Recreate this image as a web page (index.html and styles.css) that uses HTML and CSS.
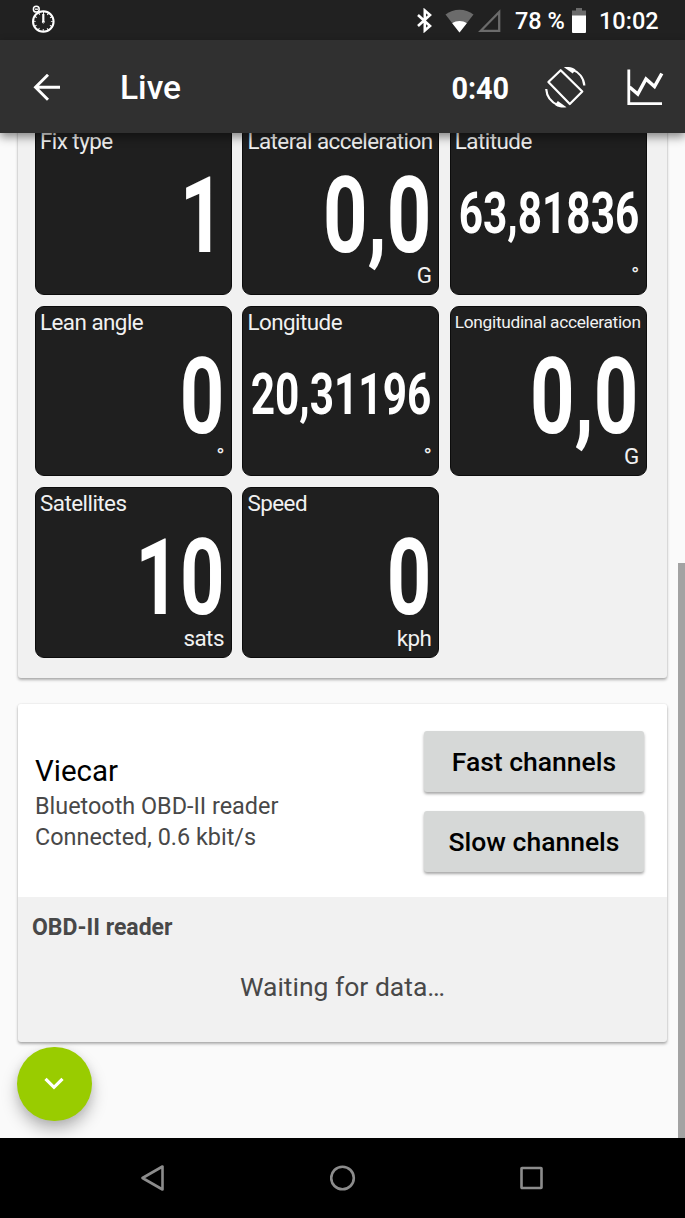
FILE: index.html
```html
<!DOCTYPE html>
<html lang="en">
<head>
    <meta charset="UTF-8">
    <meta name="viewport" content="width=device-width, initial-scale=1.0">
    <title>Live</title>
    <link rel="stylesheet" href="styles.css">
</head>
<body>
    <div class="status-bar">
        <svg class="stopwatch" width="26" height="30" viewBox="0 0 26 30" fill="none" stroke="#fff">
            <circle cx="12.3" cy="17.5" r="10.3" stroke-width="2"/>
            <circle cx="12.3" cy="17.5" r="8.6" stroke-width="2" stroke-dasharray="1 3.503" stroke-dashoffset=".5"/>
            <circle cx="5.3" cy="5.2" r="2.9" stroke-width="1.5"/>
            <path d="M4 5.2h3" stroke-width="1.3"/>
            <path d="M12.3 10v8" stroke-width="2.2"/>
            <circle cx="12.3" cy="18" r="1" stroke-width="1"/>
        </svg>
        <div class="status-icons">
            <svg class="bluetooth" width="17" height="25" viewBox="0 0 17 25" fill="none" stroke="#fff" stroke-width="2.6">
                <path d="M2 7L14 18L8.800 22.500V2.500L14 7L2 18"/>
            </svg>
            <svg class="wifi" width="29" height="24" viewBox="0 0 29 24">
                <path d="M.5 5.5C8.5-.8 20.5-.8 28.5 5.5L14.500 23.500z" fill="#6b6b6b"/>
                <path d="M7.200 14.200C11.500 11.200 17.500 11.200 21.800 14.200L14.500 23.500z" fill="#fff"/>
            </svg>
            <svg class="signal" width="23" height="24" viewBox="0 0 23 24" fill="none" stroke="#6b6b6b" stroke-width="2.3">
                <path d="M21.200 3v18.800H2.800z"/>
            </svg>
            <span class="percent">78 %</span>
            <svg class="battery" width="14" height="25" viewBox="0 0 14 25">
                <path d="M4 0h6v2.500h4V8H0V2.500h4z" fill="#6b6b6b"/>
                <path d="M0 7.500h14V24a1 1 0 0 1-1 1H1a1 1 0 0 1-1-1z" fill="#fff"/>
            </svg>
            <span class="clock">10:02</span>
        </div>
    </div>

    <header class="app-bar">
        <svg class="back" width="28" height="28" viewBox="0 0 28 28" fill="none" stroke="#fff" stroke-width="2.9">
            <path d="M27 13.300H2.500M15 .8L2.500 13.300L15 25.800"/>
        </svg>
        <h1>Live</h1>
        <span class="timer">0:40</span>
        <svg class="rotate" width="42" height="42" viewBox="0 0 42 42" fill="none" stroke="#fff" stroke-width="2.2">
            <path d="M15.700 3.200L3.400 15L24.800 37L37.300 24.500z" stroke-linejoin="round"/>
            <path d="M27 2.500C34 5 38.800 11 39.300 18.500"/>
            <path d="M1.200 22C1.700 29.500 6.500 35.500 13.500 38.500"/>
            <path d="M19 .2C23-.6 27 .2 30.500 2.500L27.800 6.500z" fill="#fff" stroke="none"/>
            <path d="M21.500 40.300C17.500 41 13.500 40.300 10 38L12.800 34z" fill="#fff" stroke="none"/>
        </svg>
        <svg class="chart" width="37" height="37" viewBox="0 0 37 37" fill="none" stroke="#fff">
            <path d="M1.800.500V34.700H35" stroke-width="2.8"/>
            <path d="M2.500 18L10.800 25L19 10L27.500 17.500L34.800 4.500" stroke-width="3.5"/>
        </svg>
    </header>

    <main class="content">
        <section class="card gps">
            <div class="tiles">
                <div class="tile">
                    <span class="title">Fix type</span>
                    <span class="value">1</span>
                </div>
                <div class="tile">
                    <span class="title">Lateral acceleration</span>
                    <span class="value">0,0</span>
                    <span class="unit">G</span>
                </div>
                <div class="tile">
                    <span class="title">Latitude</span>
                    <span class="value small">63,81836</span>
                    <span class="unit">°</span>
                </div>
                <div class="tile">
                    <span class="title">Lean angle</span>
                    <span class="value">0</span>
                    <span class="unit">°</span>
                </div>
                <div class="tile">
                    <span class="title">Longitude</span>
                    <span class="value small">20,31196</span>
                    <span class="unit">°</span>
                </div>
                <div class="tile">
                    <span class="title long">Longitudinal acceleration</span>
                    <span class="value">0,0</span>
                    <span class="unit">G</span>
                </div>
                <div class="tile">
                    <span class="title">Satellites</span>
                    <span class="value">10</span>
                    <span class="unit">sats</span>
                </div>
                <div class="tile">
                    <span class="title">Speed</span>
                    <span class="value">0</span>
                    <span class="unit">kph</span>
                </div>
            </div>
        </section>

        <section class="card obd">
            <div class="device">
                <div class="device-info">
                    <h2>Viecar</h2>
                    <p>Bluetooth OBD-II reader</p>
                    <p>Connected, 0.6 kbit/s</p>
                </div>
                <div class="device-buttons">
                    <button type="button">Fast channels</button>
                    <button type="button">Slow channels</button>
                </div>
            </div>
            <div class="reader">
                <h3>OBD-II reader</h3>
                <p>Waiting for data…</p>
            </div>
        </section>

        <div class="scrollbar"></div>
        <button type="button" class="fab" aria-label="Scroll down">
            <svg width="20" height="13" viewBox="0 0 20 13" fill="none" stroke="#fff" stroke-width="3.2">
                <path d="M1.500 1.800L10 10.300L18.500 1.800"/>
            </svg>
        </button>
    </main>

    <nav class="nav-bar">
        <svg width="26" height="26" viewBox="0 0 26 26"><path d="M22.500 1.500v23L2.500 13z"/></svg>
        <svg width="26" height="26" viewBox="0 0 26 26"><circle cx="12.500" cy="13" r="11.300"/></svg>
        <svg width="26" height="26" viewBox="0 0 26 26"><rect x="2.500" y="3" width="20" height="20" rx=".5"/></svg>
    </nav>
</body>
</html>
```

FILE: styles.css
```css
* {
    box-sizing: border-box;
}

body {
    font-family: Roboto, sans-serif;
    background-color: #fafafa;
    margin: 0;
    height: 1218px;
    overflow: hidden;
    display: flex;
    flex-direction: column;
}

h1, h2, h3, p {
    margin: 0;
}

svg {
    display: block;
    flex: none;
}

.status-bar {
    height: 40px;
    flex: none;
    background-color: #212121;
    color: #fff;
    display: flex;
    justify-content: space-between;
    padding: 0 26px 0 31px;
}

.stopwatch {
    margin-top: 4px;
}

.status-icons {
    display: flex;
    align-items: center;
    padding-top: 1px;
    font-size: 23.5px;
    font-weight: 500;
}

.bluetooth {
    margin-right: 12px;
}

.wifi {
    margin-right: 4px;
}

.signal {
    margin-right: 14px;
}

.percent {
    width: 57px;
    white-space: nowrap;
}

.clock {
    margin-left: 13px;
    width: 60px;
    white-space: nowrap;
}

.app-bar {
    height: 93px;
    flex: none;
    position: relative;
    z-index: 2;
    background-color: #303030;
    color: #fff;
    display: flex;
    align-items: center;
    padding: 2px 21px 0 33px;
    box-shadow: 0 4px 9px rgba(0, 0, 0, 0.45);
}

.app-bar h1 {
    margin-left: 59px;
    font-size: 33.5px;
    font-weight: 500;
}

.timer {
    margin-left: auto;
    font-size: 32px;
    font-weight: 700;
    transform: scaleX(0.9);
    transform-origin: right;
}

.rotate {
    margin-left: 36px;
}

.chart {
    margin-left: 40px;
}

.content {
    height: 1005px;
    flex: none;
    position: relative;
    overflow: hidden;
    padding: 0 18px;
}

.card {
    background-color: #f1f1f1;
    border-radius: 3px;
    box-shadow: 0 2px 3px rgba(0, 0, 0, 0.3), 0 0 2px rgba(0, 0, 0, 0.12);
}

.gps {
    margin-top: -30px;
    padding: 21.5px 20px 20.5px 17px;
}

.tiles {
    display: grid;
    grid-template-columns: repeat(3, 197px);
    grid-auto-rows: 170.6px;
    gap: 10.7px 10.4px;
}

.tile {
    background-color: #1f1f1f;
    border: 1px solid #0c0c0c;
    border-radius: 9px;
    color: #fff;
    display: flex;
    flex-direction: column;
    padding: 0 7px 0 4px;
}

.title {
    color: #f1f1f1;
    font-size: 22.4px;
    letter-spacing: -0.53px;
    line-height: 31px;
    height: 31px;
    white-space: nowrap;
}

.title.long {
    font-size: 17.3px;
    letter-spacing: -0.3px;
}

.value {
    align-self: flex-end;
    height: 120px;
    line-height: 119px;
    font-size: 105px;
    font-weight: 700;
    transform: scaleX(0.74);
    transform-origin: right;
    white-space: nowrap;
}

.value.small {
    font-size: 58px;
    line-height: 113px;
    transform: scaleX(0.73);
}

.unit {
    align-self: flex-end;
    color: #f1f1f1;
    font-size: 22.4px;
    letter-spacing: -0.5px;
    line-height: 26px;
    margin-top: -14.5px;
}

.obd {
    margin-top: 25.5px;
    height: 338.5px;
}

.device {
    height: 193.5px;
    background-color: #fff;
    border-radius: 3px 3px 0 0;
    display: flex;
    justify-content: space-between;
    padding: 27px 23px 0 17px;
}

.device-info {
    padding-top: 21px;
}

.device-info h2 {
    font-size: 29.5px;
    line-height: 38px;
    margin-bottom: 1px;
    font-weight: 400;
    color: #000;
}

.device-info p {
    font-size: 23.4px;
    line-height: 31.5px;
    color: #484848;
}

.device-buttons {
    display: flex;
    flex-direction: column;
    gap: 18.5px;
}

.device-buttons button {
    width: 220px;
    height: 61.5px;
    padding: 0;
    border: none;
    border-radius: 3px;
    background-color: #d6d8d7;
    color: #000;
    font-family: inherit;
    font-size: 26.5px;
    font-weight: 500;
    box-shadow: 0 2px 3px rgba(0, 0, 0, 0.35);
}

.reader {
    padding: 15px 14px;
    color: #484848;
}

.reader h3 {
    font-size: 23px;
    line-height: 32px;
    font-weight: 700;
}

.reader p {
    margin-top: 27px;
    font-size: 26.5px;
    line-height: 32px;
    text-align: center;
}

.scrollbar {
    position: absolute;
    right: 0;
    top: 430px;
    width: 7px;
    height: 575px;
    background-color: #a3a3a3;
}

.fab {
    position: absolute;
    left: 17px;
    top: 913.5px;
    width: 74.5px;
    height: 74.5px;
    padding: 0;
    border: none;
    border-radius: 50%;
    background-color: #99cc00;
    display: flex;
    align-items: center;
    justify-content: center;
    box-shadow: 0 9px 16px rgba(0, 0, 0, 0.25), 0 2px 8px rgba(0, 0, 0, 0.08);
}

.nav-bar {
    height: 80px;
    flex: none;
    background-color: #000;
    display: flex;
    align-items: center;
    justify-content: center;
    gap: 163.5px;
}

.nav-bar svg {
    fill: none;
    stroke: #8c8c8c;
    stroke-width: 2.6;
    stroke-linejoin: round;
}
```
